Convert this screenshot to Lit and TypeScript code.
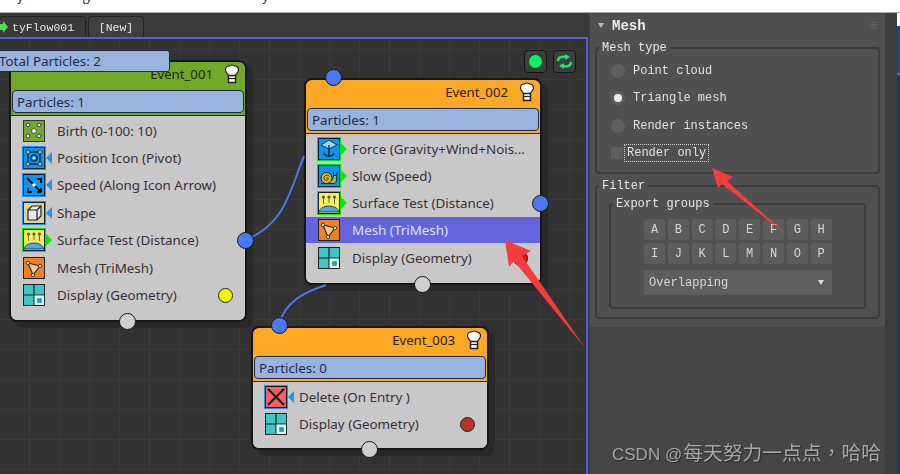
import { LitElement, html, css, svg } from "lit";
import { customElement, property } from "lit/decorators.js";

const ICONS: Record<string, unknown> = {
  birth: svg`<rect x="0.5" y="0.5" width="21" height="21" fill="#6fa82c" stroke="#333"/>
    ${[[5, 5], [16, 5], [5, 16], [16, 16]].map(([x, y]) => svg`<circle cx=${x} cy=${y} r="1.8" fill="#dfe8d0" stroke="#234" stroke-width=".8"/>`)}
    <circle cx="11" cy="11" r="2.4" fill="#fff" stroke="#234" stroke-width=".8"/>`,
  position: svg`<rect x="0.5" y="0.5" width="21" height="21" fill="#0a96f0" stroke="#123"/>
    <rect x="5" y="5" width="12" height="12" rx="2" fill="none" stroke="#123" stroke-width="1.3"/>
    <circle cx="11" cy="11" r="3.2" fill="none" stroke="#123" stroke-width="1.2"/>
    <circle cx="11" cy="11" r="1.3" fill="#fff"/>
    ${[[5, 5], [17, 5], [5, 17], [17, 17]].map(([x, y]) => svg`<circle cx=${x} cy=${y} r="2" fill="#bbb" stroke="#123" stroke-width=".8"/>`)}`,
  speed: svg`<rect x="0.5" y="0.5" width="21" height="21" fill="#0a96f0" stroke="#123"/>
    <path d="M4 4 L18 18 M18 18 v-4 M18 18 h-4 M14 5 h4 v4 M5 14 v4 h4" fill="none" stroke="#111" stroke-width="1.8"/>
    <circle cx="11" cy="11" r="1.8" fill="#fff"/>`,
  shape: svg`<rect x="0.5" y="0.5" width="21" height="21" fill="#d8d4a0" stroke="#123"/>
    <path d="M5 8 L9 4 H18 V14 L14 18 H5 Z" fill="#e8e8e8" stroke="#222" stroke-width="1.2"/>
    <path d="M5 8 H14 V18 M14 8 L18 4" fill="none" stroke="#222" stroke-width="1.2"/>`,
  surface: svg`<rect x="0.5" y="0.5" width="21" height="21" fill="#f7ee58" stroke="#123"/>
    <path d="M1 20 C3 12 19 12 21 20 Z" fill="#48a8f0" stroke="#123" stroke-width=".8"/>
    <path d="M5.5 6v6 M11 6v5 M16.5 6v6" stroke="#664" stroke-width="1"/>
    ${[5.5, 11, 16.5].map((x) => svg`<circle cx=${x} cy="5" r="1.6" fill="#555"/>`)}`,
  mesh: svg`<rect x="0.5" y="0.5" width="21" height="21" fill="#f08020" stroke="#222"/>
    <path d="M5 6 L17 9 L10 18 Z" fill="#f6c890" stroke="#222" stroke-width="1.1"/>
    ${[[5, 6], [17, 9], [10, 18]].map(([x, y]) => svg`<circle cx=${x} cy=${y} r="1.7" fill="#ddd" stroke="#222" stroke-width=".8"/>`)}`,
  display: svg`<rect x="0.5" y="0.5" width="21" height="21" fill="#40c4c4" stroke="#222"/>
    <path d="M11 0.5V21.500M0.5 11H21.500" stroke="#222" stroke-width="1.2"/>
    <rect x="11.600" y="11.600" width="9.400" height="9.400" fill="#dff"/>
    <rect x="14" y="14" width="5" height="5" fill="#2a9a9a" stroke-dasharray="1 1" stroke="#dff" stroke-width=".6"/>`,
  force: svg`<rect x="0.5" y="0.5" width="21" height="21" fill="#0a96f0" stroke="#123"/>
    <path d="M3 7 L11 2 L19 7 L11 11 Z" fill="#9ad4f8" stroke="#123" stroke-width=".9"/>
    <path d="M11 7 V19 M6 15 C7 19 15 19 16 15" fill="none" stroke="#111" stroke-width="1.200"/>`,
  slow: svg`<rect x="0.5" y="0.5" width="21" height="21" fill="#0a96f0" stroke="#123"/>
    <path d="M3 18.500 H16 C18 18.500 19 16 18.500 10.500 H15.500 C15 14 14 15 13 15" fill="#8fbf5a" stroke="#221" stroke-width="1"/>
    <circle cx="8.500" cy="13" r="5.500" fill="#f0b030" stroke="#221" stroke-width="1"/>
    <path d="M8.500 13 C9.500 12 11 13.500 9.500 15 C8 16 5.500 15 6 12.500 C6.500 10 10 9.500 11.500 11.500" fill="none" stroke="#221" stroke-width=".9"/>
    <path d="M16 10.500 L15 6.500 M18.500 10.500 L19.500 6.500" stroke="#221" stroke-width=".9"/>`,
  del: svg`<rect x="0.5" y="0.5" width="21" height="21" fill="#f86060" stroke="#123"/>
    <path d="M3 3 L19 19 M19 3 L3 19" stroke="#111" stroke-width="1.800"/>`,
};

interface Row { icon: string; label: string; mode?: "in" | "out"; selected?: boolean; dot?: string; }
interface NodeData { x: number; y: number; h: number; title: string; color: string; count: number; rows: Row[]; }
interface PortData { x: number; y: number; kind: string; }

const CANVAS_TOP = 39;

const NODES: NodeData[] = [
  {
    x: 9, y: 60, h: 262, title: "Event_001", color: "#6fa926", count: 1, rows: [
      { icon: "birth", label: "Birth (0-100: 10)" },
      { icon: "position", label: "Position Icon (Pivot)", mode: "in" },
      { icon: "speed", label: "Speed (Along Icon Arrow)", mode: "in" },
      { icon: "shape", label: "Shape", mode: "in" },
      { icon: "surface", label: "Surface Test (Distance)", mode: "out" },
      { icon: "mesh", label: "Mesh (TriMesh)" },
      { icon: "display", label: "Display (Geometry)", dot: "#f6f600" },
    ],
  },
  {
    x: 304, y: 78, h: 207, title: "Event_002", color: "#fca825", count: 1, rows: [
      { icon: "force", label: "Force (Gravity+Wind+Nois...", mode: "out" },
      { icon: "slow", label: "Slow (Speed)", mode: "out" },
      { icon: "surface", label: "Surface Test (Distance)", mode: "out" },
      { icon: "mesh", label: "Mesh (TriMesh)", selected: true },
      { icon: "display", label: "Display (Geometry)", dot: "#e01010" },
    ],
  },
  {
    x: 251, y: 326, h: 124, title: "Event_003", color: "#fca825", count: 0, rows: [
      { icon: "del", label: "Delete (On Entry )", mode: "in" },
      { icon: "display", label: "Display (Geometry)", dot: "#b83428" },
    ],
  },
];

const PORTS: PortData[] = [
  { x: 127, y: 321, kind: "grey" },
  { x: 245, y: 240, kind: "blue" },
  { x: 333, y: 77, kind: "blue" },
  { x: 540, y: 203, kind: "blue" },
  { x: 422, y: 284, kind: "grey" },
  { x: 279, y: 325, kind: "blue" },
  { x: 369, y: 449, kind: "grey" },
];

@customElement("flow-node")
class FlowNode extends LitElement {
  @property({ attribute: false }) data!: NodeData;
  static styles = css`
    :host { display: block; position: absolute; width: 238px; box-sizing: border-box; border: 2px solid #161616; border-radius: 8px;
      box-shadow: 6px 6px 0 #292929; font-family: "Noto Sans", "Liberation Sans", sans-serif; font-size: 13.4px; color: #3a3038; }
    .wrap { display: flex; flex-direction: column; height: 100%; border-radius: 6px; }
    .head { display: flex; flex-direction: column; padding: 0 1px 2px; border-bottom: 1px solid #222; }
    .title { display: flex; justify-content: flex-end; align-items: center; height: 28px; box-sizing: border-box; padding: 0 4px 4px 0; gap: 11px; color: #2a2016; font-size: 13.2px; }
    .bulb { width: 16px; height: 20px; flex: none; }
    .bar { height: 23px; box-sizing: border-box; border: 1px solid #1d2a3d; border-radius: 4px; background: #98b4dc; padding-left: 4px;
      display: flex; align-items: center; color: #1f2a4a; }
    .body { flex: 1; background: #c8c8c8; border-radius: 0 0 6px 6px; padding-top: 1px; }
    .row { display: flex; align-items: center; height: 27.4px; padding-left: 11px; box-sizing: border-box; }
    .row.sel { background: #6464dc; color: #dfe2ff; height: 26px; margin: 0 0 1.4px; }
    .ic { position: relative; width: 24px; height: 24px; display: flex; align-items: center; justify-content: center; margin-right: 11px; flex: none; box-sizing: border-box; }
    .ic svg { display: block; width: 22px; height: 22px; }
    .in { outline: 1.5px solid #1e94f0; outline-offset: -1.5px; }
    .out { outline: 1.5px solid #08e808; outline-offset: -1.5px; }
    .in::after, .out::after { content: ""; position: absolute; top: 6px; left: 24px; width: 0; height: 0; border-style: solid; border-color: transparent; }
    .in::after { border-width: 6px 6px 6px 0; border-right-color: #1e94f0; }
    .out::after { border-width: 6px 0 6px 6px; border-left-color: #08e808; }
    .label { flex: 1; white-space: nowrap; }
    .dot { width: 15px; height: 15px; border-radius: 50%; border: 1.5px solid #222; margin-right: 12.5px; box-sizing: border-box; flex: none; }
  `;
  render() {
    const d = this.data;
    return html`<div class="wrap" style="background:${d.color}">
      <div class="head">
        <div class="title"><span>${d.title}</span>
          <svg class="bulb" viewBox="0 0 16 20">
            <path d="M8 1 C6.500 1 6 2 5 2 C3 2 1.500 4 1.500 6 C1.500 8.500 4 9.500 4.500 11.500 H11.500 C12 9.500 14.500 8.500 14.500 6 C14.500 4 13 2 11 2 C10 2 9.500 1 8 1 Z" fill="#fff" stroke="#222" stroke-width="1.200"/>
            <rect x="4.500" y="11.500" width="7" height="7" fill="#fff" stroke="#222" stroke-width="1.500"/>
            <path d="M5 14.500 H11" stroke="#222" stroke-width="1.200"/>
          </svg>
        </div>
        <div class="bar">Particles: ${d.count}</div>
      </div>
      <div class="body">
        ${d.rows.map((r) => html`<div class="row ${r.selected ? "sel" : ""}">
          <div class="ic ${r.mode ?? ""}"><svg viewBox="0 0 22 22">${ICONS[r.icon]}</svg></div>
          <span class="label">${r.label}</span>
          ${r.dot ? html`<span class="dot" style="background:${r.dot}"></span>` : ""}
        </div>`)}
      </div>
    </div>`;
  }
}

@customElement("side-panel")
class SidePanel extends LitElement {
  static styles = css`
    :host { display: block; flex: 1; background: #464646; font-family: "Liberation Mono", monospace; font-size: 12px; color: #e0e0e0; border-left: 2px solid #3c3c3c; box-sizing: border-box; }
    .outer { display: flex; height: 100%; }
    .roll { width: 295px; height: 313px; margin-top: 1px; background: #505050; border-radius: 0 0 4px 4px; box-shadow: 0 1px 0 #444; padding: 0 5px; box-sizing: border-box; flex: none; }
    .rtitle { display: flex; align-items: center; height: 23px; font-weight: bold; font-size: 14px; padding-left: 3px; color: #eee; }
    .tri { width: 0; height: 0; border-style: solid; border-width: 5px 3.5px 0; border-color: #bbb transparent transparent; }
    .name { margin-left: 8px; }
    .grip { margin-left: auto; margin-right: 3px; display: block; }
    fieldset { margin: 0; border: 2px solid #3c3c3c; border-radius: 4px; padding: 0; min-width: 0; box-sizing: border-box; }
    legend { padding: 0 3px; margin-left: 2px; line-height: 13px; color: #e8e8e8; }
    .mt { height: 132.500px; margin-top: 4.500px; }
    .mt-in { padding: 2.500px 0 0 14px; display: flex; flex-direction: column; }
    .opt { display: flex; align-items: center; height: 27.500px; gap: 8px; }
    .rad { width: 14px; height: 14px; border-radius: 50%; background: #5e5e5e; flex: none; display: flex; align-items: center; justify-content: center; }
    .rad i { width: 8px; height: 8px; border-radius: 50%; background: #eee; }
    .chk { display: flex; align-items: center; height: 20px; margin-top: 3px; }
    .box { width: 12px; height: 12px; background: #5e5e5e; flex: none; }
    .focus { border: 1px dotted #ccc; height: 18px; box-sizing: border-box; padding: 0 2px; margin-left: 1px; display: flex; align-items: center; }
    .ft { height: 139.500px; margin-top: 5.500px; }
    .ft-in { padding: 5px 12px 0; }
    .eg { height: 111.500px; }
    .eg-in { padding: 8.500px 0 0 33px; }
    .grid { display: grid; grid-template-columns: repeat(8, 21px); grid-auto-rows: 21px; gap: 3px 2.800px; }
    .k { background: #5c5c5c; border-radius: 3px; display: flex; align-items: center; justify-content: center; color: #d8d8d8; font-size: 12px; }
    .sel { width: 188px; height: 25px; margin-top: 6px; background: #5e5e5e; display: flex; align-items: center; padding: 0 8px 0 5px; box-sizing: border-box; color: #d8d8d8; }
    .arr { margin-left: auto; width: 0; height: 0; border-style: solid; border-width: 5px 3.500px 0; border-color: #ddd transparent transparent; }
    .edge { flex: 1; background: #3e3e3e; position: relative; }
    .mark { position: absolute; right: 0; top: 0; bottom: 0; width: 3px; background: linear-gradient(#fff 0 13px, #0f4c88 13px 60px, #1e88d8 60px 62px, #0f3f70 62px); }
  `;
  render() {
    const opts = [["Point cloud", false], ["Triangle mesh", true], ["Render instances", false]] as const;
    return html`<div class="outer">
      <div class="roll">
        <div class="rtitle"><span class="tri"></span><span class="name">Mesh</span>
          <svg class="grip" width="7" height="7" viewBox="0 0 7 7" fill="#6c6c6c"><path d="M0 0h1v1H0zM2 0h1v1H2zM4 0h1v1H4zM6 0h1v1H6zM0 2h1v1H0zM2 2h1v1H2zM4 2h1v1H4zM6 2h1v1H6zM0 4h1v1H0zM2 4h1v1H2zM4 4h1v1H4zM6 4h1v1H6zM0 6h1v1H0zM2 6h1v1H2zM4 6h1v1H4zM6 6h1v1H6z"/></svg>
        </div>
        <fieldset class="mt">
          <legend>Mesh type</legend>
          <div class="mt-in">
            ${opts.map(([t, on]) => html`<div class="opt"><span class="rad">${on ? html`<i></i>` : ""}</span><span>${t}</span></div>`)}
            <div class="chk"><span class="box"></span><span class="focus">Render only</span></div>
          </div>
        </fieldset>
        <fieldset class="ft">
          <legend>Filter</legend>
          <div class="ft-in">
            <fieldset class="eg">
              <legend>Export groups</legend>
              <div class="eg-in">
                <div class="grid">${"ABCDEFGHIJKLMNOP".split("").map((c) => html`<div class="k">${c}</div>`)}</div>
                <div class="sel"><span>Overlapping</span><span class="arr"></span></div>
              </div>
            </fieldset>
          </div>
        </fieldset>
      </div>
      <div class="edge"><div class="mark"></div></div>
    </div>`;
  }
}

@customElement("app-root")
class AppRoot extends LitElement {
  static styles = css`
    :host { display: block; width: 900px; height: 474px; position: relative; overflow: hidden; background: #464646; font-family: "Noto Sans", sans-serif; }
    .frame { display: flex; flex-direction: column; height: 100%; filter: blur(0.35px); }
    .top { height: 13px; flex: none; background: #fff; overflow: hidden; border-bottom: 1px solid #aaa; box-sizing: border-box; display: flex; gap: 58px; padding-left: 17px; font: 13px/1 "Liberation Sans", sans-serif; color: #333; }
    .top span { margin-top: -10px; }
    .top .far { margin-left: 112px; }
    .main { flex: 1; display: flex; min-height: 0; }
    .editor { width: 588px; flex: none; display: flex; flex-direction: column; }
    .tabs { height: 24px; flex: none; background: #3a3a3a; display: flex; align-items: flex-end; gap: 2px; font: 11.500px "Liberation Mono", monospace; color: #e6e6e6; }
    .tab { height: 21px; box-sizing: border-box; border: 1px solid #222; border-bottom: 0; border-radius: 4px 4px 0 0; display: flex; align-items: center; }
    .tab.a { width: 87px; margin-left: -1px; padding-left: 0; gap: 4px; background: #3a3a3a; }
    .tab.b { width: 56px; justify-content: center; background: #404040; }
    .canvas { flex: 1; position: relative; overflow: hidden; background-color: #323232; border-top: 2px solid #5a5ae0; border-right: 2px solid #5a5ae0; box-sizing: border-box;
      background-image: linear-gradient(#393939 1px, transparent 1px), linear-gradient(90deg, #393939 1px, transparent 1px); background-size: 30px 30px; background-position: -1px 10px; }
    .wires { position: absolute; left: 0; top: 0; width: 586px; height: 435px; z-index: 1; }
    .total { position: absolute; left: -6px; top: 11px; width: 176px; height: 22px; box-sizing: border-box; background: #98b4dc; border: 1px solid #1d2a3d; border-radius: 3px; padding-left: 4px; display: flex; align-items: center; font-size: 13.400px; color: #1f2a4a; z-index: 2; }
    .port { position: absolute; width: 17px; height: 17px; margin: -8.500px 0 0 -8.500px; border-radius: 50%; border: 1.500px solid #161616; box-sizing: border-box; z-index: 3; }
    .port.blue { background: #4a78f0; }
    .port.grey { background: #cfcfcf; }
    .cbtn { position: absolute; top: 11px; width: 23px; height: 23px; background: #3a3f3b; border: 1px solid #151515; border-radius: 4px; box-sizing: border-box; display: flex; align-items: center; justify-content: center; }
    .cbtn.g { left: 524px; }
    .cbtn.r { left: 553px; }
    .led { width: 13px; height: 13px; border-radius: 50%; background: #14f060; }
    .arrows { position: absolute; left: 0; top: 0; width: 900px; height: 474px; pointer-events: none; z-index: 5; }
    .water { position: absolute; left: 612px; top: 439px; white-space: nowrap; color: #a6a6a6; font: 17px/26px "Liberation Sans", "Noto Sans CJK SC", sans-serif; text-shadow: 1px 1px 1px #2c2c2c; z-index: 6; }
    .water b { font-weight: 400; font-size: 19.800px; margin-left: 1px; font-family: "Noto Sans CJK SC", sans-serif; }
    .water i { font-style: normal; font-family: "Noto Sans CJK TC", sans-serif; }
  `;
  render() {
    return html`<div class="frame">
      <div class="top"><span>y</span><span>{y</span><span class="far">y</span></div>
      <div class="main">
        <div class="editor">
          <div class="tabs">
            <div class="tab a"><svg width="8" height="12" viewBox="0 0 8 12"><path d="M0 3H3V0L8 6L3 12V9H0Z" fill="#4be04b"/></svg><span>tyFlow001</span></div>
            <div class="tab b">[New]</div>
          </div>
          <div class="canvas">
            <svg class="wires" viewBox="0 39 586 435" fill="none" stroke="#4a78f0" stroke-width="2">
              <path d="M245 240 C285 225 290 190 304 156"/>
              <path d="M279 325 C284 302 305 292 326 285"/>
            </svg>
            <div class="total">Total Particles: 2</div>
            ${NODES.map((n) => html`<flow-node .data=${n} style="left:${n.x}px;top:${n.y - CANVAS_TOP}px;height:${n.h}px"></flow-node>`)}
            ${PORTS.map((p) => html`<div class="port ${p.kind}" style="left:${p.x}px;top:${p.y - CANVAS_TOP}px"></div>`)}
            <div class="cbtn g"><span class="led"></span></div>
            <div class="cbtn r"><svg width="17" height="17" viewBox="0 0 17 17" fill="none" stroke="#14f060" stroke-width="2.400"><path d="M2 8 C2 4 6 3 11 4"/><path d="M9 1 L14 4 L9 7 Z" fill="#14f060" stroke="none"/><path d="M15 9 C15 13 11 14 6 13"/><path d="M8 16 L3 13 L8 10 Z" fill="#14f060" stroke="none"/></svg></div>
          </div>
        </div>
        <side-panel></side-panel>
      </div>
    </div>
    <svg class="arrows" viewBox="0 0 900 474"><path fill="#f53c3c" d="M712 168 L733 177 L727 181 L787 235 L722 184 L718 188 Z"/><path fill="#f53c3c" d="M505 240 L531 251 L522 256 L585 348 L514 261 L509 267 Z"/></svg>
    <div class="water">CSDN @<b>每天努力一点点<i>，</i>哈哈</b></div>`;
  }
}
